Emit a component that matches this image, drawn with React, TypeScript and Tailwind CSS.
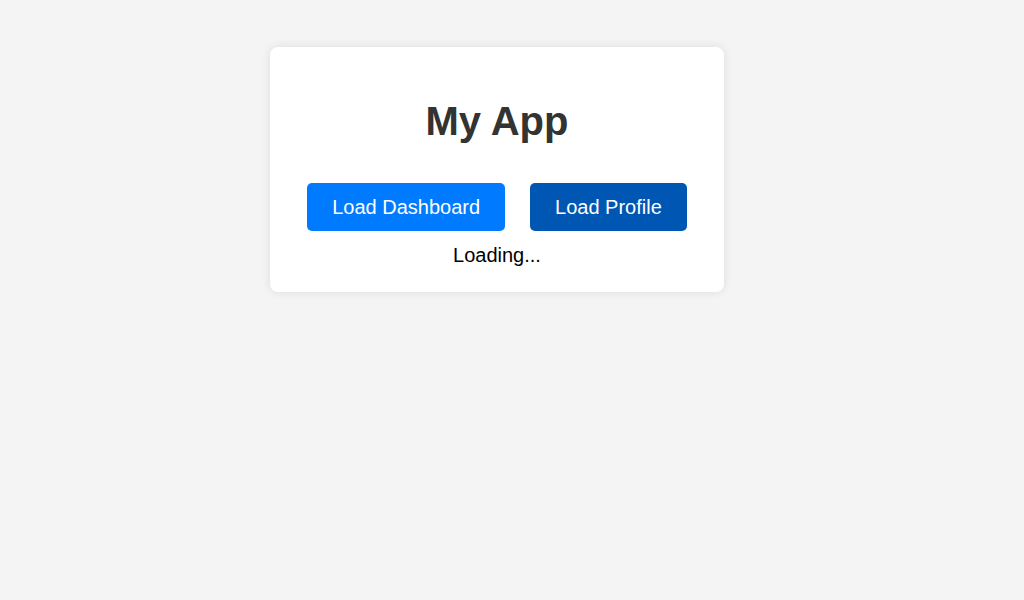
export default function App() {
  return (
    <div className="min-h-[600px] w-full bg-[#f4f4f4] font-['Liberation_Sans',Arial,sans-serif]">
      <div className="flex justify-center pr-[30px] pt-[47px]">
        <div className="flex w-[454px] flex-col items-center rounded-lg bg-white pt-[51px] pb-[25px] shadow-[0_0_10px_rgba(0,0,0,0.1)]">
          <h1 className="text-[40px] leading-[46px] font-bold text-[#333]">My App</h1>
          <div className="mt-[39px] flex gap-[25px]">
            <button className="h-[48px] rounded-[5px] bg-[#007bff] px-[25px] text-[20px] text-white">
              Load Dashboard
            </button>
            <button className="h-[48px] rounded-[5px] bg-[#0056b3] px-[25px] text-[20px] text-white">
              Load Profile
            </button>
          </div>
          <p className="mt-[13px] text-[20px] leading-[23px] text-black">Loading...</p>
        </div>
      </div>
    </div>
  )
}
